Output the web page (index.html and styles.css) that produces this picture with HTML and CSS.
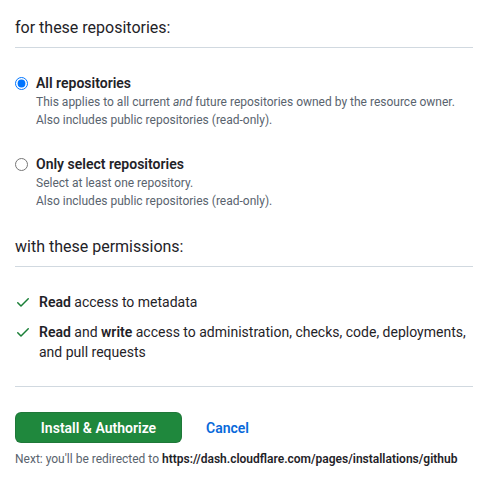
FILE: index.html
```html
<!DOCTYPE html>
<html lang="en">
<head>
    <meta charset="UTF-8">
    <meta name="viewport" content="width=device-width, initial-scale=1.0">
    <title>Install &amp; Authorize</title>
    <link rel="stylesheet" href="styles.css">
</head>
<body>
    <div class="container">
        <h3 class="section-title">for these repositories:</h3>
        <div class="options">
            <label class="option">
                <input type="radio" name="repos" checked>
                <span class="option-body">
                    <strong>All repositories</strong>
                    <span class="note">This applies to all current <em>and</em> future repositories owned by the resource owner.</span>
                    <span class="note">Also includes public repositories (read-only).</span>
                </span>
            </label>
            <label class="option">
                <input type="radio" name="repos">
                <span class="option-body">
                    <strong>Only select repositories</strong>
                    <span class="note">Select at least one repository.</span>
                    <span class="note">Also includes public repositories (read-only).</span>
                </span>
            </label>
        </div>

        <h3 class="section-title">with these permissions:</h3>
        <ul class="permissions">
            <li>
                <svg class="check" viewBox="0 0 16 16" width="16" height="16"><path d="M13.78 4.22a.75.75 0 0 1 0 1.06l-7.25 7.25a.75.75 0 0 1-1.06 0L2.22 9.28a.751.751 0 0 1 .018-1.042.751.751 0 0 1 1.042-.018L6 10.94l6.72-6.72a.75.75 0 0 1 1.06 0Z"></path></svg>
                <span><strong>Read</strong> access to metadata</span>
            </li>
            <li>
                <svg class="check" viewBox="0 0 16 16" width="16" height="16"><path d="M13.78 4.22a.75.75 0 0 1 0 1.06l-7.25 7.25a.75.75 0 0 1-1.06 0L2.22 9.28a.751.751 0 0 1 .018-1.042.751.751 0 0 1 1.042-.018L6 10.94l6.72-6.72a.75.75 0 0 1 1.06 0Z"></path></svg>
                <span><strong>Read</strong> and <strong>write</strong> access to administration, checks, code, deployments, and pull requests</span>
            </li>
        </ul>

        <div class="actions">
            <div class="buttons">
                <button class="button">Install &amp; Authorize</button>
                <a href="#" class="cancel">Cancel</a>
            </div>
            <p class="next">Next: you'll be redirected to <strong>https://dash.cloudflare.com/pages/installations/github</strong></p>
        </div>
    </div>
</body>
</html>
```

FILE: styles.css
```css
body {
    font-family: Roboto, "Liberation Sans", sans-serif;
    color: #1f2328;
    background: #ffffff;
    margin: 0;
    padding: 0;
}
.container {
    width: 458px;
    padding: 16px 15px 0;
}
.section-title {
    font-size: 16px;
    font-weight: 400;
    line-height: 24px;
    margin: 0;
    padding-bottom: 7px;
    border-bottom: 1px solid #d1d9e0;
}
.options {
    padding: 25px 0 0;
}
.option {
    display: flex;
    align-items: flex-start;
    margin-bottom: 25px;
    font-size: 14px;
}
.option input {
    margin: 4px 8px 0 0;
    width: 13px;
    height: 13px;
    flex: none;
}
.option-body {
    display: flex;
    flex-direction: column;
}
.option-body strong {
    line-height: 20px;
    font-weight: 600;
}
.note {
    font-size: 12px;
    line-height: 18px;
    color: #59636e;
}
.permissions {
    list-style: none;
    margin: 0;
    padding: 25px 0 14px;
    border-bottom: 1px solid #d1d9e0;
}
.permissions li {
    display: flex;
    align-items: flex-start;
    font-size: 14px;
    line-height: 20px;
    margin-bottom: 10px;
}
.permissions strong {
    font-weight: 600;
}
.check {
    fill: #1a7f37;
    flex: none;
    margin: 2px 8px 0 0;
}
.actions {
    padding-top: 25px;
}
.buttons {
    display: flex;
    align-items: center;
}
.button {
    font-family: inherit;
    font-size: 14px;
    font-weight: 600;
    color: #ffffff;
    background: #1f883d;
    border: 1px solid rgba(31, 35, 40, 0.15);
    border-radius: 6px;
    width: 167px;
    height: 31px;
    padding: 0;
    cursor: pointer;
}
.cancel {
    margin-left: 24px;
    color: #0969da;
    font-size: 14px;
    font-weight: 600;
    text-decoration: none;
}
.next {
    font-size: 12px;
    line-height: 18px;
    color: #59636e;
    margin: 7px 0 0;
}
.next strong {
    color: #1f2328;
    font-weight: 600;
}
```
